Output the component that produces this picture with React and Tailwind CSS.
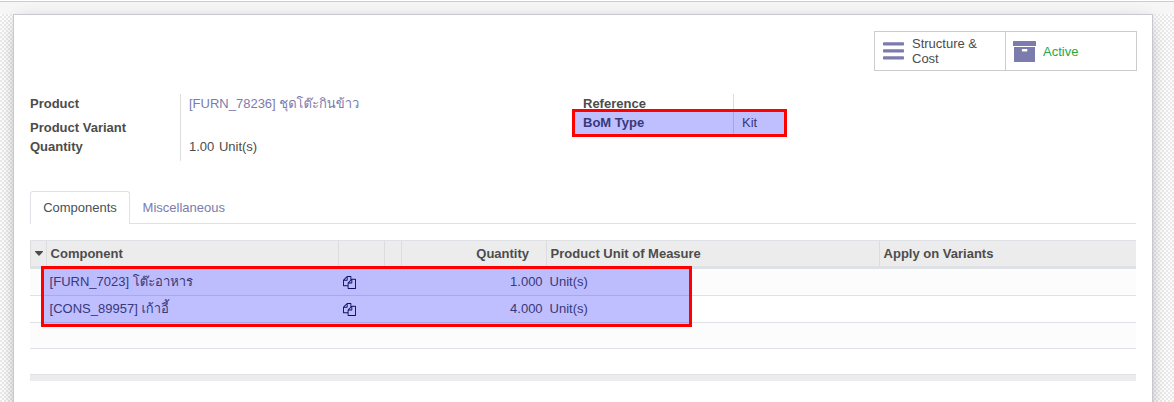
import React from "react";

const CopyIcon = () => (
  <svg viewBox="0 0 1792 1792" className="h-[13px] w-[13px] fill-[#10132c]">
    <path d="M1696 384q40 0 68 28t28 68v1216q0 40-28 68t-68 28h-960q-40 0-68-28t-28-68v-288h-544q-40 0-68-28t-28-68v-672q0-40 20-88t48-76l408-408q28-28 76-48t88-20h416q40 0 68 28t28 68v328q68-40 128-40h416zm-544 213l-299 299h299v-299zm-640-384l-299 299h299v-299zm196 647l316-316v-416h-384v416q0 40-28 68t-68 28h-416v640h512v-256q0-40 20-88t48-76zm956 804v-1152h-384v416q0 40-28 68t-68 28h-416v640h896z" />
  </svg>
);

const BarsIcon = () => (
  <svg viewBox="0 0 21 18" className="h-[18px] w-[21px] fill-[#7c7bad]">
    <rect x="0" y="0.2" width="21" height="3.4" rx="0.8" />
    <rect x="0" y="7.2" width="21" height="3.4" rx="0.8" />
    <rect x="0" y="14.2" width="21" height="3.4" rx="0.8" />
  </svg>
);

const ArchiveIcon = () => (
  <svg viewBox="0 0 23 21" className="h-[21px] w-[23px] fill-[#7c7bad]">
    <rect x="0" y="0" width="23" height="5" rx="0.6" />
    <path fillRule="evenodd" d="M1 6h21v14.4q0 .6-.6.6h-19.8q-.6 0-.6-.6zM9.6 8q-.8 0-.8 1.2t.8 1.2h4q.8 0 .8-1.2t-.8-1.2z" />
  </svg>
);

const Thai = ({ children }) => (
  <span className="font-[Loma,Waree,Garuda,Umpush,'Noto_Sans_Thai_Looped','Tlwg_Typo',Norasi,Kinnari,FreeSans,FreeSerif,'Liberation_Sans',sans-serif]">
    {children}
  </span>
);

const columns = "grid grid-cols-[16px_292px_46px_17px_145px_333px_257px]";

const rows = [
  { code: "[FURN_7023]", name: "โต๊ะอาหาร", qty: "1.000", unit: "Unit(s)" },
  { code: "[CONS_89957]", name: "เก้าอี้", qty: "4.000", unit: "Unit(s)" },
];

export default function App() {
  return (
    <div className="relative flex h-[402px] w-[1174px] flex-col overflow-hidden bg-white font-['Liberation_Sans',sans-serif] text-[13px] leading-[19px] text-[#4c4c4c]">
      <div className="h-[2px] shrink-0 border-b border-[#cccccc] bg-white" />
      <div className="h-3 shrink-0 bg-[#f6f6f6]" />
      <div className="flex h-[388px] shrink-0 bg-[#f9f9f9] bg-[repeating-conic-gradient(#e9e9e9_0_25%,#fcfcfc_0_50%)] bg-[length:4px_4px] pl-[13px]">
        <div className="h-[420px] w-[1140px] shrink-0 border border-[#c8c8d3] bg-white px-4 pt-4 shadow-[0_5px_20px_-15px_#000,0_2px_14px_rgba(0,0,0,0.09)]">
          <div className="-mr-px flex justify-end">
            <div className="flex h-10 w-[263px] border border-[#cccccc] leading-[15px]">
              <div className="flex w-[131px] items-center border-r border-[#cccccc] pl-2">
                <BarsIcon />
                <span className="ml-2 w-[80px]">Structure &amp; Cost</span>
              </div>
              <div className="flex items-center pl-[7px]">
                <ArchiveIcon />
                <span className="ml-[7px] text-[#28a745]">Active</span>
              </div>
            </div>
          </div>

          <div className="mt-[23px] flex h-[67px]">
            <div className="flex w-[553px]">
              <div className="flex w-[151px] flex-col border-r border-[#dddddd] font-bold">
                <span>Product</span>
                <span className="mt-[5px]">Product Variant</span>
                <span>Quantity</span>
              </div>
              <div className="flex flex-col pl-2">
                <span className="h-[43px] text-[#7c7bad]">[FURN_78236] <Thai>ชุดโต๊ะกินข้าว</Thai></span>
                <span className="[word-spacing:1px]">1.00 Unit(s)</span>
              </div>
            </div>
            <div className="flex h-[42px]">
              <div className="flex w-[151px] flex-col border-r border-[#dddddd] font-bold">
                <span>Reference</span>
                <span>BoM Type</span>
              </div>
              <span className="pt-[19px] pl-2">Kit</span>
            </div>
          </div>

          <div className="mt-[30px] flex h-[33px] border-b border-[#dee2e6]">
            <div className="flex h-[33px] w-[100px] items-center justify-center rounded-t-[3px] border border-b-0 border-[#dee2e6] bg-white pb-px text-[#495057]">Components</div>
            <div className="flex h-[33px] items-center pl-[12.6px] text-[#7c7bad]">Miscellaneous</div>
          </div>

          <div className="mt-4">
            <div className={`${columns} h-[29px] border-t border-b-[3px] border-t-[#dee2e6] border-b-[#dee2e6] bg-[#ececec] font-bold leading-[25px]`}>
              <div className="flex items-center border-l border-[#dddddd] pl-1">
                <svg viewBox="0 0 8 5" className="h-[5px] w-2 fill-[#4c4c4c]"><path d="M.4 0h7.2q.7.2.2.9l-3.3 3.6q-.5.4-1 0l-3.3-3.6q-.5-.7.2-.9z" /></svg>
              </div>
              <div className="border-l border-[#dddddd] pl-[3.6px]">Component</div>
              <div className="border-l border-[#dddddd]" />
              <div className="border-l border-[#dddddd]" />
              <div className="border-l border-[#dddddd] pr-[17px] text-right">Quantity</div>
              <div className="border-l border-[#dddddd] pl-[3.6px]">Product Unit of Measure</div>
              <div className="border-l border-[#dddddd] pl-[3.6px]">Apply on Variants</div>
            </div>
            {rows.map((row) => (
              <div key={row.code} className={`${columns} h-[27px] overflow-hidden border-b border-[#dee2e6] leading-[26px] odd:bg-white even:bg-[#fcfcfc]`}>
                <div />
                <div className="h-[26px] pl-[3.6px]">{row.code} <Thai>{row.name}</Thai></div>
                <div className="flex items-center pl-[5.3px]"><CopyIcon /></div>
                <div />
                <div className="pr-[3.4px] text-right">{row.qty}</div>
                <div className="pl-[3.6px]">{row.unit}</div>
                <div />
              </div>
            ))}
            <div className="h-[26px] border-b border-[#dee2e6] bg-[#fcfcfc]" />
            <div className="h-[26px] border-b border-[#dee2e6]" />
            <div className="h-[6px] bg-[#ececec]" />
          </div>
        </div>
      </div>

      <div className="absolute top-[109px] left-[572px] h-7 w-[215px] border-[3px] border-[#ff0000] bg-[#0000ff]/25 bg-clip-padding" />
      <div className="absolute top-[266px] left-[41px] h-[61px] w-[651px] border-[3px] border-[#ff0000] bg-[#0000ff]/25 bg-clip-padding" />
    </div>
  );
}
